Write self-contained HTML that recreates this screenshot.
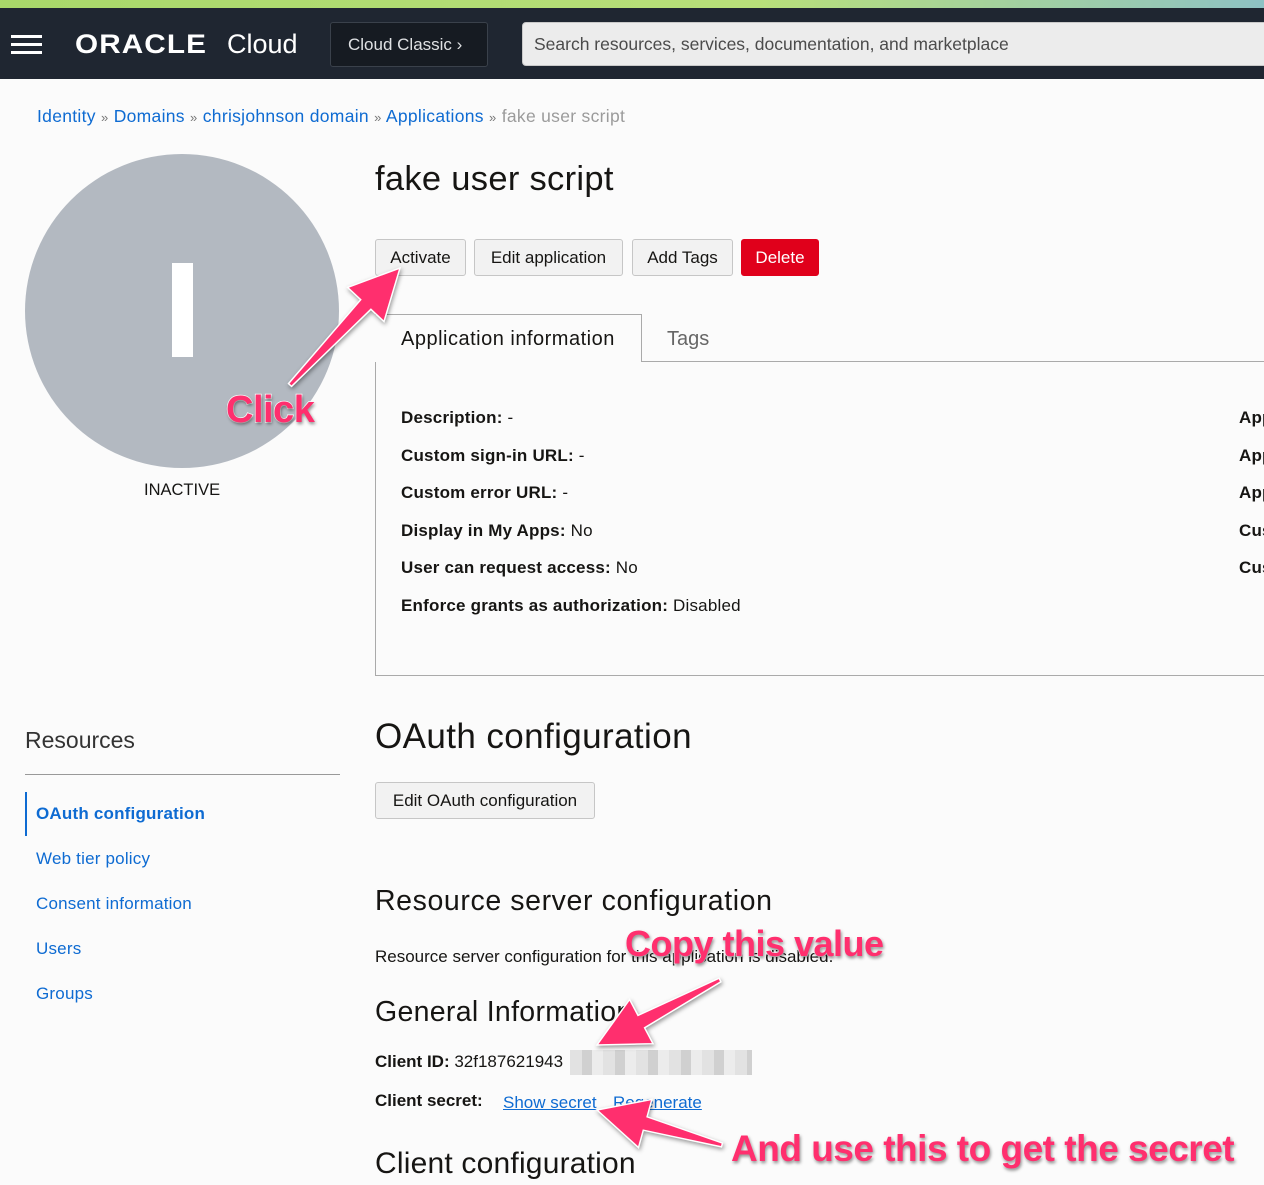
<!DOCTYPE html>
<html><head><meta charset="utf-8"><style>
*{margin:0;padding:0;box-sizing:border-box}
body{width:1264px;height:1185px;overflow:hidden;background:#fbfbfb;font-family:"Liberation Sans",Arial,sans-serif;color:#161513;position:relative}
.a{position:absolute;white-space:nowrap}
.lnk{color:#0e6bd2}
.btn{position:absolute;top:239px;height:37px;border:1px solid #c6c6c6;border-radius:3px;background:#f2f2f2;font-size:17px;line-height:35px;text-align:center;color:#161513}
.lbl{font-size:17px;position:absolute;left:401px;white-space:nowrap;letter-spacing:0.2px}
.lbl b{font-weight:bold}
.nav{position:absolute;left:36px;font-size:17px;color:#0e6bd2;letter-spacing:0.2px}
.ann{position:absolute;white-space:nowrap;font-weight:bold;color:#ff2f6e;-webkit-text-stroke:1.5px #fff;paint-order:stroke fill;text-shadow:1px 2px 3px rgba(0,0,0,.45);letter-spacing:-0.5px}
</style></head><body>
<div class="a" style="left:0;top:0;width:1264px;height:8px;background:linear-gradient(90deg,#a8d86a,#b8e07a 60%,#8ec2c4)"></div>
<div class="a" style="left:0;top:8px;width:1264px;height:71px;background:#1f2631"></div>
<div class="a" style="left:11px;top:35px;width:31px;height:3px;background:#fff;box-shadow:0 8px 0 #fff,0 16px 0 #fff"></div>
<div class="a" style="left:75px;top:29px;color:#fff;font-size:27px;letter-spacing:1px;font-weight:bold;transform:scaleX(1.1);transform-origin:left">ORACLE</div>
<div class="a" style="left:227px;top:29px;color:#fff;font-size:27px">Cloud</div>
<div class="a" style="left:330px;top:22px;width:158px;height:45px;background:#161b22;border:1px solid #3a414b;border-radius:3px;color:#dfe1e3;font-size:17px;line-height:43px;padding-left:17px">Cloud Classic ›</div>
<div class="a" style="left:522px;top:22px;width:760px;height:44px;background:#ececec;border:1px solid #c9c9c9;border-radius:4px;color:#4b4b4b;font-size:17.5px;line-height:42px;padding-left:11px">Search resources, services, documentation, and marketplace</div>
<div class="a" style="left:37px;top:106px;font-size:17.5px;letter-spacing:0.3px"><span class="lnk">Identity</span> <span style="color:#777;font-size:13px">»</span> <span class="lnk">Domains</span> <span style="color:#777;font-size:13px">»</span> <span class="lnk">chrisjohnson domain</span> <span style="color:#777;font-size:13px">»</span> <span class="lnk">Applications</span> <span style="color:#777;font-size:13px">»</span> <span style="color:#9b9b9b">fake user script</span></div>
<div class="a" style="left:25px;top:154px;width:314px;height:314px;border-radius:50%;background:#b3b9c1"></div>
<div class="a" style="left:172px;top:263px;width:21px;height:94px;background:#fff"></div>
<div class="a" style="left:144px;top:481px;font-size:16.5px">INACTIVE</div>
<div class="a" style="left:375px;top:160px;font-size:34.5px;letter-spacing:0.3px">fake user script</div>
<div class="btn" style="left:375px;width:91px">Activate</div>
<div class="btn" style="left:474px;width:149px">Edit application</div>
<div class="btn" style="left:632px;width:101px">Add Tags</div>
<div class="btn" style="left:741px;width:78px;background:#e0001b;border-color:#e0001b;color:#fff">Delete</div>
<div class="a" style="left:375px;top:314px;width:900px;height:362px;border-left:1px solid #aaa;border-bottom:1px solid #aaa"></div>
<div class="a" style="left:375px;top:314px;width:267px;height:48px;border-top:1px solid #aaa;border-right:1px solid #aaa;background:#fbfbfb"></div>
<div class="a" style="left:641px;top:361px;width:623px;height:1px;background:#aaa"></div>
<div class="a" style="left:401px;top:328px;font-size:20px;letter-spacing:0.5px">Application information</div>
<div class="a" style="left:667px;top:328px;font-size:20px;color:#666">Tags</div>
<div class="lbl" style="top:408px"><b>Description:</b> -</div>
<div class="lbl" style="top:446px"><b>Custom sign-in URL:</b> -</div>
<div class="lbl" style="top:483px"><b>Custom error URL:</b> -</div>
<div class="lbl" style="top:521px"><b>Display in My Apps:</b> No</div>
<div class="lbl" style="top:558px"><b>User can request access:</b> No</div>
<div class="lbl" style="top:596px"><b>Enforce grants as authorization:</b> Disabled</div>
<div class="lbl" style="left:1239px;top:408px"><b>App</b></div>
<div class="lbl" style="left:1239px;top:446px"><b>App</b></div>
<div class="lbl" style="left:1239px;top:483px"><b>App</b></div>
<div class="lbl" style="left:1239px;top:521px"><b>Cus</b></div>
<div class="lbl" style="left:1239px;top:558px"><b>Cus</b></div>
<div class="a" style="left:25px;top:727px;font-size:23px;color:#333">Resources</div>
<div class="a" style="left:25px;top:774px;width:315px;height:1px;background:#999"></div>
<div class="a" style="left:25px;top:792px;width:2px;height:44px;background:#0e6bd2"></div>
<div class="nav" style="top:804px;font-weight:bold">OAuth configuration</div>
<div class="nav" style="top:849px">Web tier policy</div>
<div class="nav" style="top:894px">Consent information</div>
<div class="nav" style="top:939px">Users</div>
<div class="nav" style="top:984px">Groups</div>
<div class="a" style="left:375px;top:717px;font-size:35px;letter-spacing:0.4px">OAuth configuration</div>
<div class="btn" style="left:375px;top:782px;width:220px">Edit OAuth configuration</div>
<div class="a" style="left:375px;top:885px;font-size:28.5px;letter-spacing:0.6px">Resource server configuration</div>
<div class="a" style="left:375px;top:947px;font-size:17px">Resource server configuration for this application is disabled.</div>
<div class="a" style="left:375px;top:996px;font-size:28.5px;letter-spacing:0.3px">General Information</div>
<div class="a" style="left:375px;top:1052px;font-size:17px"><b>Client ID:</b> 32f187621943</div>
<div class="a" style="left:570px;top:1050px;width:182px;height:25px;background:repeating-linear-gradient(90deg,#e2e2e2 0 12px,#d0d0d0 12px 22px,#ececec 22px 33px)"></div>
<div class="a" style="left:375px;top:1091px;font-size:17px"><b>Client secret:</b></div>
<div class="a" style="left:503px;top:1093px;font-size:17px;color:#0e6bd2;text-decoration:underline">Show secret</div>
<div class="a" style="left:613px;top:1093px;font-size:17px;color:#0e6bd2;text-decoration:underline">Regenerate</div>
<div class="a" style="left:375px;top:1147px;font-size:30px;letter-spacing:0.2px">Client configuration</div>
<svg class="a" style="left:0;top:0" width="1264" height="1185">
<g fill="#ff2f6e" stroke="#fff" stroke-width="1.5" style="filter:drop-shadow(1px 2px 2px rgba(0,0,0,.4))">
<polygon points="291.5,386.4 370.9,309.3 384,321.6 400,268 347.6,287.4 360.7,299.7 288.5,383.6"/>
<polygon points="720.9,981.8 644.6,1027.8 653,1043.7 597,1045 629.6,999.5 638,1015.4 719.1,978.2"/>
<polygon points="721.5,1146.9 643.3,1130.2 638.5,1147.6 597,1110 651.9,1099.4 647.1,1116.8 722.5,1143.1"/>
</g></svg>
<div class="ann" style="left:226px;top:389px;font-size:38px">Click</div>
<div class="ann" style="left:625px;top:923px;font-size:36px">Copy this value</div>
<div class="ann" style="left:731px;top:1128px;font-size:37px">And use this to get the secret</div>
</body></html>
